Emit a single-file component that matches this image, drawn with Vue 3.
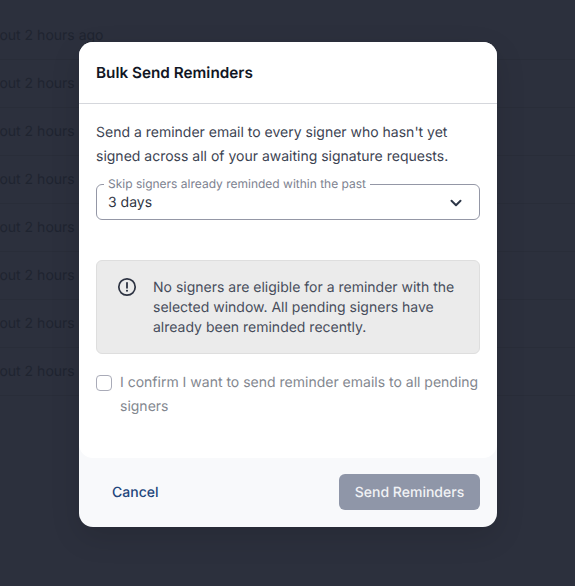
<script setup>
const rows = ['about 2 hours ago','about 2 hours ago','about 2 hours ago','about 2 hours ago','about 2 hours ago','about 2 hours ago','about 2 hours ago','about 2 hours ago']
</script>

<template>
  <div class="page">
    <div class="table">
      <div v-for="(r, i) in rows" :key="i" class="row"><span class="cell">{{ r }}</span></div>
    </div>
    <div class="overlay">
      <div class="modal">
        <div class="main">
          <header class="head"><h2>Bulk Send Reminders</h2></header>
          <div class="body">
            <p class="desc">Send a reminder email to every signer who hasn't yet signed across all of your awaiting signature requests.</p>
            <fieldset class="field">
              <legend>Skip signers already reminded within the past</legend>
              <div class="value">
                <span class="value-text">3 days</span>
                <svg width="20" height="20" viewBox="0 0 20 20" fill="none"><path d="M5.5 7.8 10 12.2l4.5-4.4" stroke="#2d3748" stroke-width="2" stroke-linecap="round" stroke-linejoin="round"/></svg>
              </div>
            </fieldset>
            <div class="alert">
              <svg class="alert-icon" width="22" height="22" viewBox="0 0 22 22" fill="none"><circle cx="11" cy="11" r="8.2" stroke="#2d3342" stroke-width="1.7"/><path d="M11 6.8v5" stroke="#2d3342" stroke-width="1.8" stroke-linecap="round"/><circle cx="11" cy="14.8" r="1.05" fill="#2d3342"/></svg>
              <p>No signers are eligible for a reminder with the selected window. All pending signers have already been reminded recently.</p>
            </div>
            <label class="confirm">
              <span class="box"></span>
              <span class="confirm-text">I confirm I want to send reminder emails to all pending signers</span>
            </label>
          </div>
        </div>
        <footer class="foot">
          <button class="cancel" type="button">Cancel</button>
          <button class="send" type="button">Send Reminders</button>
        </footer>
      </div>
    </div>
  </div>
</template>

<style>
html, body { margin: 0; background: #2c303d; }
</style>

<style scoped>
.page { position: relative; width: 575px; height: 586px; overflow: hidden; background: #2c303d; font-family: Inter, "Liberation Sans", sans-serif; text-rendering: geometricPrecision; }
.table { padding-top: 12px; margin-left: -17px; }
.row { box-sizing: border-box; height: 48px; padding-bottom: 1px; border-bottom: 1px solid #292d39; display: flex; align-items: center; }
.cell { font-size: 14px; color: #1f2430; white-space: nowrap; }
.overlay { position: absolute; inset: 0; display: flex; align-items: flex-start; padding: 42px 0 0 79px; box-sizing: border-box; }
.modal { width: 418px; height: 485px; background: #f8f9fb; border-radius: 14px; display: flex; flex-direction: column; overflow: hidden; box-shadow: 0 10px 30px rgba(0,0,0,.12); }
.main { height: 416px; background: #fff; border-radius: 0 0 14px 14px; flex: none; }
.head { height: 62px; box-sizing: border-box; border-bottom: 1px solid #d5d7dc; padding: 0 17px; display: flex; align-items: center; }
.head h2 { margin: 0; font-size: 15.3px; font-weight: 600; color: #111624; }
.body { padding: 17px 17px 0; }
.desc { margin: 0; font-size: 14px; line-height: 24px; color: #3c4352; }
.field { margin: 8px 0 0; padding: 0 11px; height: 43px; box-sizing: border-box; border: 1px solid #9497a6; border-radius: 6px; min-width: 0; }
.field legend { padding: 0 4px; font-size: 12px; line-height: 14px; color: #7d8290; margin-left: -4px; }
.value { display: flex; justify-content: space-between; align-items: center; font-size: 14px; line-height: 20px; color: #2f3543; margin-top: 1px; margin-right: 2px; }
.value-text { padding-top: 1px; }
.alert { margin-top: 40px; height: 94px; box-sizing: border-box; background: #ebebeb; border: 1px solid #dedede; border-radius: 6px; padding: 17px 20px 0 19px; display: flex; gap: 15px; }
.alert-icon { flex: none; margin-top: -2px; }
.alert p { margin: 0; font-size: 14px; line-height: 20px; color: #474d5b; }
.confirm { display: flex; margin-top: 17px; gap: 8px; align-items: flex-start; }
.box { flex: none; width: 14px; height: 14px; border: 1px solid #a9abb8; border-radius: 4px; margin-top: 4px; }
.confirm-text { font-size: 14px; line-height: 24px; color: #83878f; }
.foot { flex: 1; padding: 0 17px 2px 17px; display: flex; justify-content: space-between; align-items: center; }
button { font-family: inherit; font-size: 14px; border: 0; font-weight: 500; text-rendering: geometricPrecision; }
.cancel { background: none; color: #22467c; padding: 2px 16px 0; height: 36px; }
.send { background: #8f96a8; color: #f1f2f5; width: 141px; height: 36px; border-radius: 6px; padding: 2px 0 0; }
</style>
